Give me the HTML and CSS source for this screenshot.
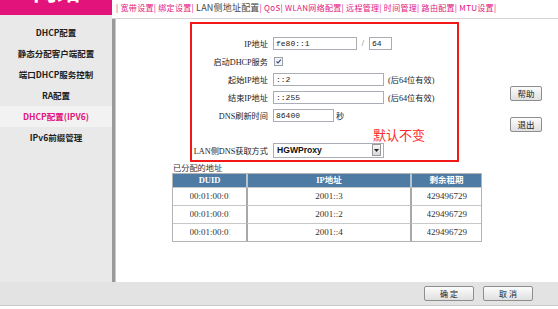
FILE: index.html
```html
<!DOCTYPE html>
<html>
<head>
<meta charset="utf-8">
<link rel="stylesheet" href="styles.css">
</head>
<body>
<div class="app">
  <div class="side">
    <div class="logo"><span>网络</span></div>
    <ul class="menu">
      <li>DHCP配置</li>
      <li>静态分配客户端配置</li>
      <li>端口DHCP服务控制</li>
      <li>RA配置</li>
      <li class="active">DHCP配置(IPV6)</li>
      <li>IPv6前缀管理</li>
    </ul>
  </div>
  <div class="main">
    <div class="nav">| 宽带设置| 绑定设置| <span class="cur">LAN侧地址配置</span>| QoS| WLAN网络配置| 远程管理| 时间管理| 路由配置| MTU设置|</div>
    <div class="content">
      <div class="center">
        <div class="box">
          <div class="row">
            <label class="lbl">IP地址</label>
            <div class="inp w84">fe80::1</div>
            <span class="slash">/</span>
            <div class="inp w23">64</div>
          </div>
          <div class="row">
            <label class="lbl">启动DHCP服务</label>
            <span class="chk"><svg width="7" height="7" viewBox="0 0 7 7"><path d="M1.5 3.5 L3 5 L5.8 1.6" fill="none" stroke="#2a3f8a" stroke-width="1.1"/></svg></span>
          </div>
          <div class="row">
            <label class="lbl">起始IP地址</label>
            <div class="inp w111">::2</div>
            <span class="hint">(后64位有效)</span>
          </div>
          <div class="row">
            <label class="lbl">结束IP地址</label>
            <div class="inp w111">::255</div>
            <span class="hint">(后64位有效)</span>
          </div>
          <div class="row">
            <label class="lbl">DNS刷新时间</label>
            <div class="inp w61">86400</div>
            <span class="unit">秒</span>
          </div>
          <div class="row note">默认不变</div>
          <div class="row">
            <label class="lbl">LAN侧DNS获取方式</label>
            <div class="select"><span>HGWProxy</span><i class="arrow"><svg width="5" height="3" viewBox="0 0 5 3"><path d="M0 0 H5 L2.5 3 Z" fill="#222"/></svg></i></div>
          </div>
        </div>
        <div class="caption">已分配的地址</div>
        <div class="tbl">
          <div class="th">DUID</div><div class="th sep">IP地址</div><div class="th sep">剩余租期</div>
          <div class="td"><div class="clip">00:01:00:01:1c</div></div><div class="td sep">2001::3</div><div class="td sep"><div class="clip">4294967295</div></div>
          <div class="td"><div class="clip">00:01:00:01:1c</div></div><div class="td sep">2001::2</div><div class="td sep"><div class="clip">4294967295</div></div>
          <div class="td"><div class="clip">00:01:00:01:1c</div></div><div class="td sep">2001::4</div><div class="td sep"><div class="clip">4294967295</div></div>
        </div>
      </div>
      <div class="actions">
        <button class="btn">帮助</button>
        <button class="btn">退出</button>
      </div>
    </div>
  </div>
</div>
<div class="foot">
  <button class="btn wide">确 定</button>
  <button class="btn wide">取 消</button>
</div>
</body>
</html>
```

FILE: styles.css
```css
html, body { margin: 0; padding: 0; background: #fff; }
body { font-family: "Noto Sans CJK SC", sans-serif; color: #222; width: 558px; height: 309px; overflow: hidden; }

.app { display: flex; height: 282px; }

.side { width: 112px; flex-shrink: 0; display: flex; flex-direction: column; }
.logo { height: 15px; background: #e2147b; overflow: hidden; }
.logo span { display: block; margin-left: 33px; margin-top: -25px; font-size: 24px; line-height: 30px; font-weight: 700; color: #fff; }
.menu { flex: 1; margin: 0; padding: 7px 0 0 0; list-style: none; background: #e9e9e9; }
.menu li { height: 21px; line-height: 21px; text-align: center; font-size: 8.5px; font-weight: 700; color: #1e1e1e; }
.menu li.active { background: #f2f2f2; color: #e2147b; }

.main { flex: 1; display: flex; flex-direction: column; }
.nav { height: 18px; line-height: 15px; padding-left: 4px; font-size: 8px; letter-spacing: 0.3px; color: #e2147b; border-bottom: 1px solid #d4d4d4; white-space: nowrap; overflow: hidden; }
.nav .cur { color: #444; font-size: 9px; letter-spacing: 0.2px; }

.content { flex: 1; display: flex; padding-top: 3px; background: #fff; border-left: 3px solid #9a9a9a; box-shadow: inset 1px 0 0 #c9c9c9; }
.center { margin-left: 57px; width: 310px; flex-shrink: 0; }

.box { margin-left: 18px; width: 269px; height: 140px; box-sizing: border-box; border: 2px solid #f01818; padding-top: 10px; font-family: "Liberation Serif", "Noto Sans CJK SC", serif; font-size: 8.2px; color: #222; }
.row { display: flex; align-items: center; height: 18px; }
.lbl { width: 76px; margin-right: 5px; text-align: right; white-space: nowrap; }
.inp { height: 13px; box-sizing: border-box; border: 1px solid #a9aeb4; line-height: 11px; padding-left: 2px; font-family: "Liberation Mono", "Noto Sans CJK SC", monospace; font-size: 8px; color: #222; background: #fff; }
.w84 { width: 84px; }
.w23 { width: 23px; }
.w111 { width: 111px; }
.w61 { width: 61px; }
.slash { width: 12px; text-align: center; color: #555; }
.hint { margin-left: 4px; }
.unit { margin-left: 2px; }
.chk { width: 7px; height: 7px; margin-left: 1px; border: 1px solid #9aa0a8; background: #f4f4f4; display: flex; }
.chk svg { display: block; }
.note { height: 17px; padding-left: 181px; padding-top: 4px; box-sizing: border-box; font-family: "Noto Sans CJK SC", sans-serif; font-size: 13px; color: #ff2a2a; }
.select { width: 111px; height: 15px; box-sizing: border-box; border: 1px solid #a9aeb4; display: flex; align-items: center; justify-content: space-between; background: #fff; }
.select span { padding-left: 3px; font-family: "Liberation Sans", sans-serif; font-weight: 700; font-size: 8.6px; color: #111; }
.arrow { width: 7px; height: 10px; margin-right: 2px; border: 1px solid #999; background: linear-gradient(#f6f6f6, #d8d8d8); display: flex; align-items: center; justify-content: center; }
.arrow svg { display: block; }

.caption { height: 11px; line-height: 11px; padding-left: 1px; font-size: 8.2px; color: #333; }
.tbl { display: grid; grid-template-columns: 73px 164px 71px; width: 310px; box-sizing: border-box; border: 1px solid #b4b4b4; font-family: "Liberation Serif", "Noto Sans CJK SC", serif; font-size: 9px; color: #333; }
.th { height: 13px; line-height: 13px; text-align: center; background: #4e7ba4; color: #fff; font-weight: 700; font-size: 8.5px; }
.th.sep { border-left: 2px solid #b8c4cf; }
.td { height: 18px; line-height: 17px; text-align: center; border-top: 1px solid #c8c8c8; }
.td.sep { border-left: 2px solid #a8a8a8; }
.th, .td { box-sizing: border-box; }
.clip { width: 40px; margin: 0 auto; overflow: hidden; white-space: nowrap; text-align: left; }

.actions { margin-left: 28px; padding-top: 64px; display: flex; flex-direction: column; gap: 16px; align-items: flex-start; }
.btn { width: 32px; height: 15px; padding: 0; border: 1px solid #8e8e8e; border-radius: 2px; background: linear-gradient(#fcfcfc, #e0e0e0); font-family: "Noto Sans CJK SC", sans-serif; font-size: 8.5px; line-height: 13px; color: #222; cursor: default; }

.foot { height: 24px; box-sizing: border-box; background: #e3e3e3; border-bottom: 1px solid #c9c9c9; display: flex; justify-content: flex-end; align-items: flex-start; padding: 4px 25px 0 0; gap: 9px; }
.btn.wide { width: 50px; font-size: 8px; }
```
